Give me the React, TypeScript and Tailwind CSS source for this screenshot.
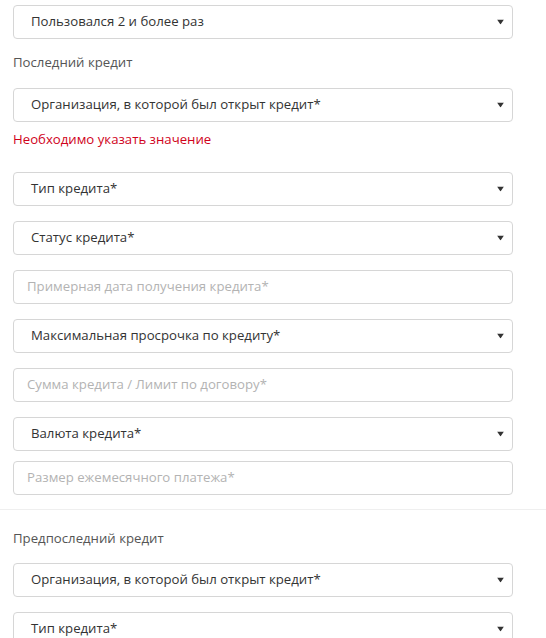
import React from 'react';

const font = { fontFamily: '"Open Sans", "Noto Sans", sans-serif' };

const Arrow: React.FC = () => (
  <svg width="7" height="5" viewBox="0 0 7 5" className="absolute right-[8px] top-1/2 -translate-y-1/2">
    <path d="M0 0 L7 0 L3.5 5 Z" fill="#333" />
  </svg>
);

const Select: React.FC<{ label: string; className?: string }> = ({ label, className = '' }) => (
  <div
    className={`relative h-[34px] w-[500px] rounded-[4px] border border-[#d6d6d6] bg-white pl-[17px] flex items-center text-[13.2px] text-[#333] ${className}`}
  >
    <span>{label}</span>
    <Arrow />
  </div>
);

const Field: React.FC<{ placeholder: string; className?: string }> = ({ placeholder, className = '' }) => (
  <div
    className={`h-[34px] w-[500px] rounded-[4px] border border-[#d6d6d6] bg-white pl-[13px] flex items-center text-[13.2px] text-[#b3b3b3] ${className}`}
  >
    {placeholder}
  </div>
);

export default function App() {
  return (
    <div className="w-[546px] h-[638px] overflow-hidden bg-white" style={font}>
      <div className="pl-[13px] pt-[5px]">
        <Select label="Пользовался 2 и более раз" />
        <p className="mt-[13px] leading-[20px] text-[13.2px] text-[#555]">Последний кредит</p>
        <Select label="Организация, в которой был открыт кредит*" className="mt-[16px]" />
        <p className="mt-[7px] leading-[20px] text-[13.2px] text-[#d0021b]">Необходимо указать значение</p>

        <div className="mt-[23px] flex flex-col gap-[15px]">
          <Select label="Тип кредита*" />
          <Select label="Статус кредита*" />
          <Field placeholder="Примерная дата получения кредита*" />
          <Select label="Максимальная просрочка по кредиту*" />
          <Field placeholder="Сумма кредита / Лимит по договору*" />
          <Select label="Валюта кредита*" />
        </div>
        <Field placeholder="Размер ежемесячного платежа*" className="mt-[10px]" />
      </div>

      <div className="mt-[14px] border-t border-[#efefef]" />

      <div className="pl-[13px]">
        <p className="mt-[18px] leading-[20px] text-[13.2px] text-[#555]">Предпоследний кредит</p>
        <div className="mt-[15px] flex flex-col gap-[15px]">
          <Select label="Организация, в которой был открыт кредит*" />
          <Select label="Тип кредита*" />
        </div>
      </div>
    </div>
  );
}
